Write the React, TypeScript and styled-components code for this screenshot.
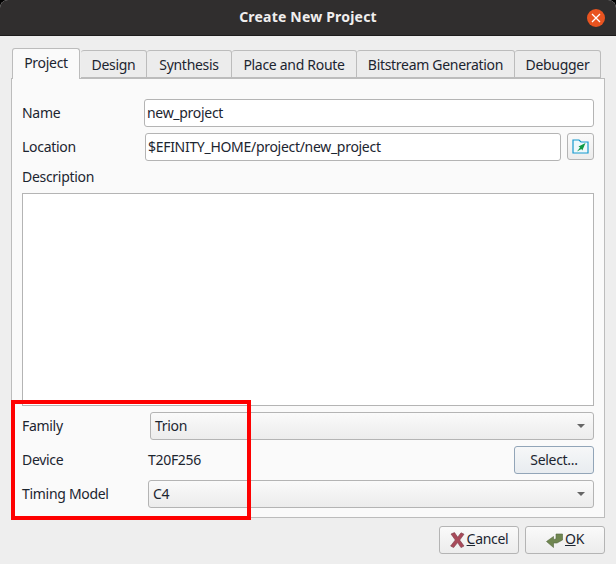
import React from "react";
import styled, { createGlobalStyle } from "styled-components";

const GlobalStyle = createGlobalStyle`
  html, body {
    margin: 0;
    padding: 0;
    background: #000;
  }

  body {
    font-family: "Noto Sans", sans-serif;
    font-size: 14px;
    letter-spacing: -0.3px;
    color: #1c2530;
  }
`;

const Window = styled.div`
  position: relative;
  width: 616px;
  height: 564px;
  overflow: hidden;
  background: #eeeeee;
  border-radius: 8px 8px 0 0;
  display: flex;
  flex-direction: column;
`;

const TitleBar = styled.div`
  position: relative;
  height: 36px;
  flex: none;
  display: flex;
  align-items: center;
  justify-content: center;
  padding-bottom: 2px;
  background: #302e2e;
  border-bottom: 1px solid #1d1c1c;
  box-sizing: border-box;
  color: #f0eeee;
  font-weight: 700;
  font-size: 14px;
  letter-spacing: 0.2px;
`;

const CloseButton = styled.div`
  position: absolute;
  right: 11px;
  top: 9px;
  width: 18px;
  height: 18px;
  border-radius: 50%;
  background: #e95420;
  display: flex;
  align-items: center;
  justify-content: center;
`;

const Body = styled.div`
  flex: 1;
  display: flex;
  flex-direction: column;
  padding: 12px 11px 11px 11px;
`;

const TabBar = styled.div`
  display: flex;
  align-items: flex-end;
  height: 30px;
  padding-left: 1px;
  position: relative;
  z-index: 1;
`;

const Tab = styled.div<{ $active?: boolean; $width: number }>`
  box-sizing: border-box;
  width: ${({ $width }) => $width}px;
  height: ${({ $active }) => ($active ? 31 : 28)}px;
  margin-bottom: ${({ $active }) => ($active ? -1 : 0)}px;
  margin-right: ${({ $active }) => ($active ? 1 : 0)}px;
  display: flex;
  align-items: center;
  justify-content: center;
  padding-bottom: ${({ $active }) => ($active ? 3 : 0)}px;
  background: ${({ $active }) => ($active ? "#fafafa" : "#ececec")};
  border: 1px solid #bcbcbc;
  border-bottom: ${({ $active }) => ($active ? "none" : "1px solid #bcbcbc")};
  border-left: ${({ $active }) => ($active ? "1px solid #bcbcbc" : "none")};
  border-radius: 3px 3px 0 0;
  white-space: nowrap;
`;

const Pane = styled.div`
  box-sizing: border-box;
  width: 594px;
  height: 440px;
  background: #fafafa;
  border: 1px solid #bcbcbc;
  padding: 20px 10px 8px 10px;
  display: flex;
  flex-direction: column;
`;

const Row = styled.div<{ $gap?: number }>`
  display: flex;
  align-items: center;
  height: 28px;
  margin-bottom: ${({ $gap }) => $gap ?? 6}px;
  flex: none;
`;

const Label = styled.div<{ $width: number }>`
  width: ${({ $width }) => $width}px;
  flex: none;
  padding-bottom: 2px;
  white-space: nowrap;
`;

const Field = styled.div`
  box-sizing: border-box;
  flex: 1;
  height: 28px;
  display: flex;
  align-items: center;
  padding: 0 2px 2px;
  background: #ffffff;
  border: 1px solid #b4b4b4;
  border-radius: 3px;
  white-space: nowrap;
`;

const DescriptionLabel = styled.div`
  height: 20px;
  line-height: 20px;
  margin-bottom: 6px;
  flex: none;
`;

const DescriptionBox = styled.div`
  box-sizing: border-box;
  height: 213px;
  flex: none;
  margin-bottom: 6px;
  background: #ffffff;
  border: 1px solid #b4b4b4;
`;

const Combo = styled.div`
  box-sizing: border-box;
  flex: 1;
  height: 28px;
  display: flex;
  align-items: center;
  justify-content: space-between;
  padding: 0 8px 2px 4px;
  background: linear-gradient(#fafafa, #ececec);
  border: 1px solid #b4b4b4;
  border-radius: 3px;
`;

const ComboArrow = styled.div`
  width: 0;
  height: 0;
  margin-top: 2px;
  border-left: 4px solid transparent;
  border-right: 4px solid transparent;
  border-top: 4px solid #666666;
`;

const Value = styled.div`
  flex: 1;
  padding-bottom: 2px;
`;

const Button = styled.div<{ $width: number; $focused?: boolean }>`
  box-sizing: border-box;
  width: ${({ $width }) => $width}px;
  height: 28px;
  flex: none;
  display: flex;
  align-items: center;
  justify-content: center;
  gap: 2px;
  background: ${({ $focused }) =>
    $focused ? "linear-gradient(#f6f7f8, #e8ecf0)" : "linear-gradient(#fafafa, #ececec)"};
  border: 1px solid ${({ $focused }) => ($focused ? "#92a5b8" : "#b4b4b4")};
  border-radius: 3px;
`;

const ButtonText = styled.span<{ $raise?: number }>`
  padding-bottom: ${({ $raise }) => $raise ?? 2}px;
`;

const BrowseButton = styled(Button)`
  height: 27px;
  margin-left: 6px;
  margin-bottom: 1px;
`;

const Footer = styled.div`
  display: flex;
  justify-content: flex-end;
  gap: 6px;
  margin-top: 8px;
`;

const Mnemonic = styled.span`
  text-decoration: underline;
`;

const Highlight = styled.div`
  position: absolute;
  left: 11px;
  top: 400px;
  width: 240px;
  height: 120px;
  box-sizing: border-box;
  border: 4px solid #fe0000;
  pointer-events: none;
`;

const tabs = [
  { name: "Project", width: 68, active: true },
  { name: "Design", width: 66 },
  { name: "Synthesis", width: 85 },
  { name: "Place and Route", width: 125 },
  { name: "Bitstream Generation", width: 158 },
  { name: "Debugger", width: 86 }
];

const FolderIcon = () => (
  <svg width="17" height="15" viewBox="0 0 17 15">
    <path d="M1 1h6l2 2h7v11H1z" fill="#eef8fb" stroke="#1499cf" strokeWidth="1.2" />
    <path d="M13.5 4 6.5 7.5l1.6 1L5 12.5l4.4-2.4.9 1.4z" fill="#0f9a45" />
  </svg>
);

const CrossIcon = () => (
  <svg width="15" height="16" viewBox="0 0 15 16">
    <path
      d="M1 2 4.5.6l3.2 4.6L11 .8l3 1.4-4.3 5.9L14 14l-3 1.6-3.4-5L3.6 15.6.6 14l4.7-6z"
      fill="#a84a5a"
      stroke="#7b3a46"
      strokeWidth="0.6"
    />
  </svg>
);

const ReturnIcon = () => (
  <svg width="17" height="15" viewBox="0 0 17 15">
    <path
      d="M10 1h6.5v6L11 10H7.5v4.5l-7-6 7-5v3L10 6z"
      fill="#6f8650"
      stroke="#56683f"
      strokeWidth="0.6"
    />
  </svg>
);

const App = () => {
  return (
    <>
      <GlobalStyle />
      <Window>
        <TitleBar>
          Create New Project
          <CloseButton>
            <svg width="10" height="10" viewBox="0 0 10 10">
              <path d="M1 1l8 8M9 1l-8 8" stroke="#ffffff" strokeWidth="1.3" />
            </svg>
          </CloseButton>
        </TitleBar>
        <Body>
          <TabBar>
            {tabs.map(tab => (
              <Tab key={tab.name} $active={tab.active} $width={tab.width}>
                {tab.name}
              </Tab>
            ))}
          </TabBar>
          <Pane>
            <Row>
              <Label $width={122}>Name</Label>
              <Field>new_project</Field>
            </Row>
            <Row>
              <Label $width={123}>Location</Label>
              <Field>$EFINITY_HOME/project/new_project</Field>
              <BrowseButton $width={27}>
                <FolderIcon />
              </BrowseButton>
            </Row>
            <DescriptionLabel>Description</DescriptionLabel>
            <DescriptionBox />
            <Row>
              <Label $width={128}>Family</Label>
              <Combo>
                Trion
                <ComboArrow />
              </Combo>
            </Row>
            <Row>
              <Label $width={126}>Device</Label>
              <Value>T20F256</Value>
              <Button $width={80} $focused>
                <ButtonText>Select...</ButtonText>
              </Button>
            </Row>
            <Row $gap={0}>
              <Label $width={126}>Timing Model</Label>
              <Combo>
                C4
                <ComboArrow />
              </Combo>
            </Row>
          </Pane>
          <Footer>
            <Button $width={80}>
              <CrossIcon />
              <ButtonText $raise={4}>
                <Mnemonic>C</Mnemonic>ancel
              </ButtonText>
            </Button>
            <Button $width={80}>
              <ReturnIcon />
              <ButtonText $raise={4}>
                <Mnemonic>O</Mnemonic>K
              </ButtonText>
            </Button>
          </Footer>
        </Body>
        <Highlight />
      </Window>
    </>
  );
};

export default App;
